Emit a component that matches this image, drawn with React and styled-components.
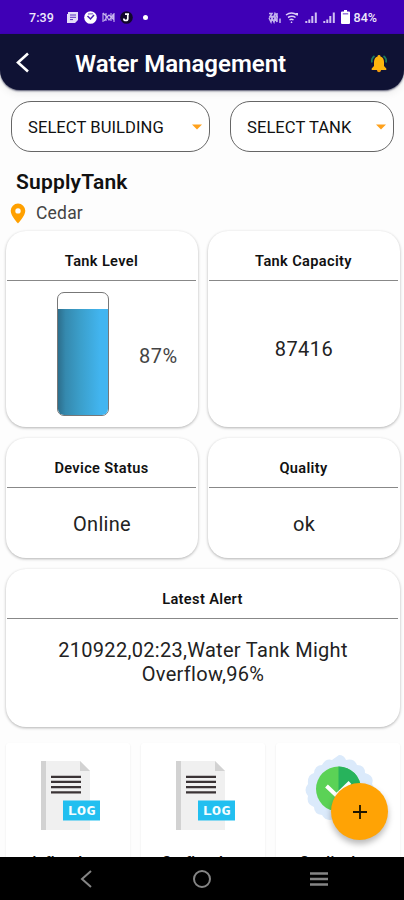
import React, { Component } from 'react'
import styled, { createGlobalStyle } from 'styled-components'

const GlobalStyle = createGlobalStyle`
    * { box-sizing: border-box; }
    body {
        margin: 0;
        background: #fdfdfd;
        font-family: Roboto, "Liberation Sans", sans-serif;
        color: #111;
    }
`;

const Screen = styled.div`
    position: relative;
    display: flex;
    flex-direction: column;
    width: 404px;
    height: 900px;
    overflow: hidden;
    background: #fdfdfd;
`;

const StatusBar = styled.div`
    display: flex;
    flex: none;
    align-items: center;
    justify-content: space-between;
    height: 34px;
    padding: 0 27px 0 29px;
    background: #3f00b6;
    color: #eee8fb;
    font-size: 12.5px;
    font-weight: 500;
`;

const StatusGroup = styled.div`
    display: flex;
    align-items: center;
    gap: ${props => props.$gap}px;
    svg { display: block; }
`;

const Clock = styled.span`
    width: 31px;
    letter-spacing: 0.1px;
`;

const Header = styled.header`
    display: flex;
    flex: none;
    align-items: center;
    height: 56px;
    padding: 2px 16px 0 15px;
    border-radius: 0 0 20px 20px;
    background: #0f1234;
    box-shadow: 0 1px 2px rgba(15, 18, 52, 0.7), 0 3px 8px rgba(0, 0, 0, 0.08);
`;

const HeaderTitle = styled.h1`
    flex: 1;
    margin: 1px 0 0 44px;
    color: #fff;
    font-size: 24px;
    font-weight: 600;
    line-height: 30px;
`;

const Content = styled.main`
    flex: 1;
    min-height: 0;
    overflow: hidden;
    padding: 11px 4px 0 6px;
`;

const Selects = styled.div`
    display: flex;
    justify-content: space-between;
    padding: 0 6px 0 5px;
`;

const Select = styled.button`
    display: flex;
    align-items: center;
    justify-content: space-between;
    width: ${props => props.$width}px;
    height: 51px;
    padding: 1px 7px 0 16px;
    border: 1px solid #666;
    border-radius: 20px;
    background: #fff;
    color: #111;
    font: 400 16.6px Roboto, sans-serif;
    letter-spacing: 0.05px;
`;

const TankName = styled.h2`
    margin: 17px 0 0 10px;
    font-size: 21px;
    font-weight: 600;
    line-height: 26px;
    letter-spacing: 0.2px;
`;

const Place = styled.div`
    display: flex;
    align-items: center;
    gap: 10px;
    height: 25px;
    margin-top: 5px;
    padding: 1px 0 0 4px;
    color: #444;
    font-size: 17.5px;
    letter-spacing: 0.2px;
`;

const Cards = styled.div`
    display: grid;
    grid-template-columns: 192px 192px;
    gap: 11px 10px;
    margin-top: 6px;
`;

const CardBox = styled.section`
    grid-column: ${props => props.$wide ? 'span 2' : 'auto'};
    display: flex;
    flex-direction: column;
    height: ${props => props.$height}px;
    border-radius: 20px;
    background: #fff;
    box-shadow: 0 1px 3px rgba(0, 0, 0, 0.3);
`;

const CardTitle = styled.h3`
    height: 50px;
    margin: 0 2px 0 1px;
    padding-top: 10px;
    border-bottom: 1px solid #888;
    font-size: 14.6px;
    font-weight: 600;
    line-height: 40px;
    letter-spacing: 0.35px;
    text-align: center;
`;

const Value = styled.div`
    padding-top: ${props => props.$top}px;
    color: #222;
    font-size: 20px;
    line-height: 24px;
    letter-spacing: ${props => props.$spacing || 0.3}px;
    text-align: center;
`;

const LevelRow = styled.div`
    display: flex;
    padding: 11px 0 0 51px;
`;

const Tank = styled.div`
    display: flex;
    align-items: flex-end;
    width: 52px;
    height: 124px;
    overflow: hidden;
    border: 1px solid #777;
    border-radius: 7px;
    background: #fff;
`;

const Water = styled.div`
    width: 100%;
    background: linear-gradient(90deg, #2c6e8c 0, #3589ae 15%, #3b9fcb 45%, #42b5f0 85%);
`;

const Percent = styled.div`
    margin: 52px 0 0 30px;
    color: #444;
    font-size: 20px;
    line-height: 24px;
    letter-spacing: 0.5px;
`;

const Logs = styled.div`
    display: grid;
    grid-template-columns: repeat(3, 124px);
    gap: 11px;
    margin-top: 16px;
`;

const LogCard = styled.div`
    display: flex;
    flex-direction: column;
    align-items: center;
    height: 150px;
    padding-top: 9px;
    border-radius: 3px;
    background: #fff;
    box-shadow: 0 1px 2px rgba(0, 0, 0, 0.1);
    svg { flex: none; overflow: visible; }
`;

const LogName = styled.div`
    margin-top: 21px;
    font-size: 14.6px;
    font-weight: 600;
    line-height: 18px;
    letter-spacing: 0.3px;
    white-space: nowrap;
`;

const Fab = styled.button`
    position: absolute;
    right: 16px;
    bottom: 60px;
    display: flex;
    align-items: center;
    justify-content: center;
    width: 57px;
    height: 57px;
    padding: 0;
    border: 0;
    border-radius: 50%;
    background: #ffa305;
    box-shadow: 0 4px 6px rgba(0, 0, 0, 0.28);
`;

const NavBar = styled.nav`
    display: flex;
    flex: none;
    align-items: center;
    justify-content: space-between;
    height: 43px;
    padding: 1px 75px 0 79px;
    background: #000;
`;

const StatusIcons = () => (
    <StatusGroup $gap={5}>
        <svg width="13" height="13" viewBox="0 0 13 13">
            <path d="M2 1h10v8l-3 3H1V3h1z" fill="#e4dcf8" />
            <path d="M4 4h6M4 6.3h6M4 8.6h3" stroke="#5d2fc2" strokeWidth="1" />
        </svg>
        <svg width="13" height="13" viewBox="0 0 13 13">
            <circle cx="6.5" cy="6.5" r="6.3" fill="#fff" />
            <path d="M3.5 5l3 3 3.5-4" fill="none" stroke="#4b20b6" strokeWidth="1.5" />
            <path d="M4 3l5-.2" stroke="#4b20b6" strokeWidth=".8" />
        </svg>
        <svg width="13" height="13" viewBox="0 0 13 13">
            <path d="M1 2v9M12 2v9M1 2l4 4 2-2 4 4V3M2 10l3-4 2 3 4-5M4 2v8M9 2v8" fill="none" stroke="#c9b6ef" strokeWidth="1.1" />
        </svg>
        <svg width="13" height="13" viewBox="0 0 13 13">
            <circle cx="6.5" cy="6.5" r="6.3" fill="#12072c" />
            <path d="M5 3.2h4M7.8 3v4.5q0 2-2 2t-2-2" fill="none" stroke="#fff" strokeWidth="1.7" />
        </svg>
        <svg width="13" height="13" viewBox="0 0 13 13">
            <circle cx="7.5" cy="6.5" r="2.5" fill="#fff" />
        </svg>
    </StatusGroup>
);

const Signal = () => (
    <svg width="13" height="13" viewBox="0 0 13 13">
        <path d="M1.3 12v-2M4.3 12V8.5M7.3 12V5M10.8 12V1.5" stroke="#cfc0f3" strokeWidth="2" />
    </svg>
);

const PhoneIcons = () => (
    <StatusGroup $gap={5}>
        <svg width="32" height="13" viewBox="0 0 32 13">
            <path d="M1 2.5h3l-2 3h4l1-3 2 3V2M1 7l2 4 1-4 2 4 1-4 2 4V7M12 7.5v4.5M1 6h9" fill="none" stroke="#c4b2ee" strokeWidth="1.5" />
            <path d="M18 4q5.5-4 11 0M20 6.5q4-2.5 7.5 0M21.5 9q2-1.5 4 0" fill="none" stroke="#ddd0f8" strokeWidth="1.5" />
            <path d="M22.5 12l1-2 1 2zM27 2h3v3" fill="#ddd0f8" />
        </svg>
        <Signal />
        <Signal />
        <StatusGroup $gap={4}>
            <svg width="9" height="14" viewBox="0 0 9 14">
                <path d="M3 0h3v1.5h2q1 0 1 1V13q0 1-1 1H1q-1 0-1-1V2.5q0-1 1-1h2z" fill="#fff" />
                <path d="M1.8 3.8h5.4" stroke="#8e6ada" strokeWidth="1.4" />
            </svg>
            <span>84%</span>
        </StatusGroup>
    </StatusGroup>
);

const BellIcon = () => (
    <svg width="18" height="19" viewBox="0 0 18 19">
        <path d="M4.5 2Q1 4.5 2 8.5M13.5 2q3.5 2.5 2.5 6.5" fill="none" stroke="#1c7a5c" strokeWidth="1.7" />
        <path d="M9 1q1.5 0 1.5 1.4Q14 3.8 14 8v4l2.3 2.5V16H1.7v-1.5L4 12V8q0-4.2 3.5-5.6Q7.5 1 9 1z" fill="#fdb50d" />
        <path d="M6.8 16h4.4q-.5 2.3-2.2 2.3T6.8 16z" fill="#f29b0b" />
    </svg>
);

const Caret = () => (
    <svg width="10" height="6" viewBox="0 0 10 6">
        <path d="M0 .5h10L5 5.5z" fill="#ffa11c" />
    </svg>
);

const PinIcon = () => (
    <svg width="16" height="21" viewBox="0 0 16 21">
        <path fillRule="evenodd" d="M8 .5a7.3 7.3 0 0 1 7.3 7.3C15.3 13 8 20.5 8 20.5S.7 13 .7 7.8A7.3 7.3 0 0 1 8 .5zm0 4.7a2.7 2.7 0 1 0 0 5.4 2.7 2.7 0 0 0 0-5.4z" fill="#ffa000" />
    </svg>
);

const LogIcon = () => (
    <svg width="60" height="80" viewBox="0 0 60 80">
        <path d="M3 9h39l10 10v59H3z" fill="#f0f0f0" />
        <path d="M3 9h5v69H3z" fill="#d2d2d2" />
        <path d="M42 9l10 10H42z" fill="#d2d2d2" />
        <path d="M13 24.8h30M13 29.9h30M13 35.1h30M13 40.3h30" stroke="#3a3335" strokeWidth="2.2" />
        <path d="M25 48.5h37v20H25z" fill="#22bff0" />
        <text x="29.5" y="63.3" textLength="28" lengthAdjust="spacingAndGlyphs" fill="#f4fdff" fontFamily="DejaVu Sans Mono" fontWeight="700" fontSize="13">LOG</text>
    </svg>
);

const QualityIcon = () => (
    <svg width="70" height="80" viewBox="0 0 70 80">
        <path d="M36 3q5 0 7 5 8-2 11 5 8 0 8 8 10 3 7 11 5 6 1 12 1 8-6 11-1 8-9 8-4 7-12 4-7 5-12 0-8 3-12-4-8-1-8-8-8-3-6-11-5-6 0-12-1-9 6-11 1-8 8-8 4-7 10-5z" fill="#dbeafb" />
        <circle cx="35.5" cy="37" r="22.5" fill="#5bd256" />
        <path d="M35.5 14.5a22.5 22.5 0 0 1 0 45z" fill="#27b35c" />
        <path d="M23.500 34l10 9.500 13.500-13" fill="none" stroke="#fff" strokeWidth="4" />
    </svg>
);

const Card = ({ title, children, ...box }) => (
    <CardBox {...box}>
        <CardTitle>{title}</CardTitle>
        {children}
    </CardBox>
);

class WaterManagement extends Component {
    constructor(props) {
        super(props);

        this.state = {
            tank: 'SupplyTank',
            building: 'Cedar',
            level: 87,
            capacity: 87416,
            status: 'Online',
            quality: 'ok',
            alert: '210922,02:23,Water Tank Might Overflow,96%'
        }
    }

    render() {
        const { tank, building, level, capacity, status, quality, alert } = this.state;

        return (
            <Screen>
                <GlobalStyle />
                <StatusBar>
                    <StatusGroup $gap={6}>
                        <Clock>7:39</Clock>
                        <StatusIcons />
                    </StatusGroup>
                    <PhoneIcons />
                </StatusBar>
                <Header>
                    <svg width="16" height="22" viewBox="0 0 16 22">
                        <path d="M13 1.500L3 10.500l10 9" fill="none" stroke="#fff" strokeWidth="2.6" />
                    </svg>
                    <HeaderTitle>Water Management</HeaderTitle>
                    <BellIcon />
                </Header>
                <Content>
                    <Selects>
                        <Select $width={199}>SELECT BUILDING<Caret /></Select>
                        <Select $width={164}>SELECT TANK<Caret /></Select>
                    </Selects>
                    <TankName>{tank}</TankName>
                    <Place><PinIcon />{building}</Place>
                    <Cards>
                        <Card title="Tank Level" $height={196}>
                            <LevelRow>
                                <Tank><Water style={{ height: `${level}%` }} /></Tank>
                                <Percent>{level}%</Percent>
                            </LevelRow>
                        </Card>
                        <Card title="Tank Capacity" $height={196}>
                            <Value $top={56} $spacing={0.5}>{capacity}</Value>
                        </Card>
                        <Card title="Device Status" $height={120}>
                            <Value $top={24}>{status}</Value>
                        </Card>
                        <Card title="Quality" $height={120}>
                            <Value $top={24}>{quality}</Value>
                        </Card>
                        <Card title="Latest Alert" $height={158} $wide>
                            <Value $top={19}>{alert}</Value>
                        </Card>
                    </Cards>
                    <Logs>
                        <LogCard><LogIcon /><LogName>Inflow Log</LogName></LogCard>
                        <LogCard><LogIcon /><LogName>Outflow Log</LogName></LogCard>
                        <LogCard><QualityIcon /><LogName>Quality Log</LogName></LogCard>
                    </Logs>
                </Content>
                <NavBar>
                    <svg width="14" height="20" viewBox="0 0 14 20">
                        <path d="M12 2L3 10l9 8" fill="none" stroke="#858585" strokeWidth="2" />
                    </svg>
                    <svg width="20" height="20" viewBox="0 0 20 20">
                        <circle cx="11" cy="10" r="8" fill="none" stroke="#858585" strokeWidth="2" />
                    </svg>
                    <svg width="20" height="20" viewBox="0 0 20 20">
                        <path d="M1 4.5h18M1 10h18M1 15.5h18" stroke="#858585" strokeWidth="2.4" />
                    </svg>
                </NavBar>
                <Fab>
                    <svg width="16" height="16" viewBox="0 0 16 16">
                        <path d="M8 1v14M1 8h14" stroke="#1c1400" strokeWidth="1.8" />
                    </svg>
                </Fab>
            </Screen>
        )
    }
}

export default WaterManagement
